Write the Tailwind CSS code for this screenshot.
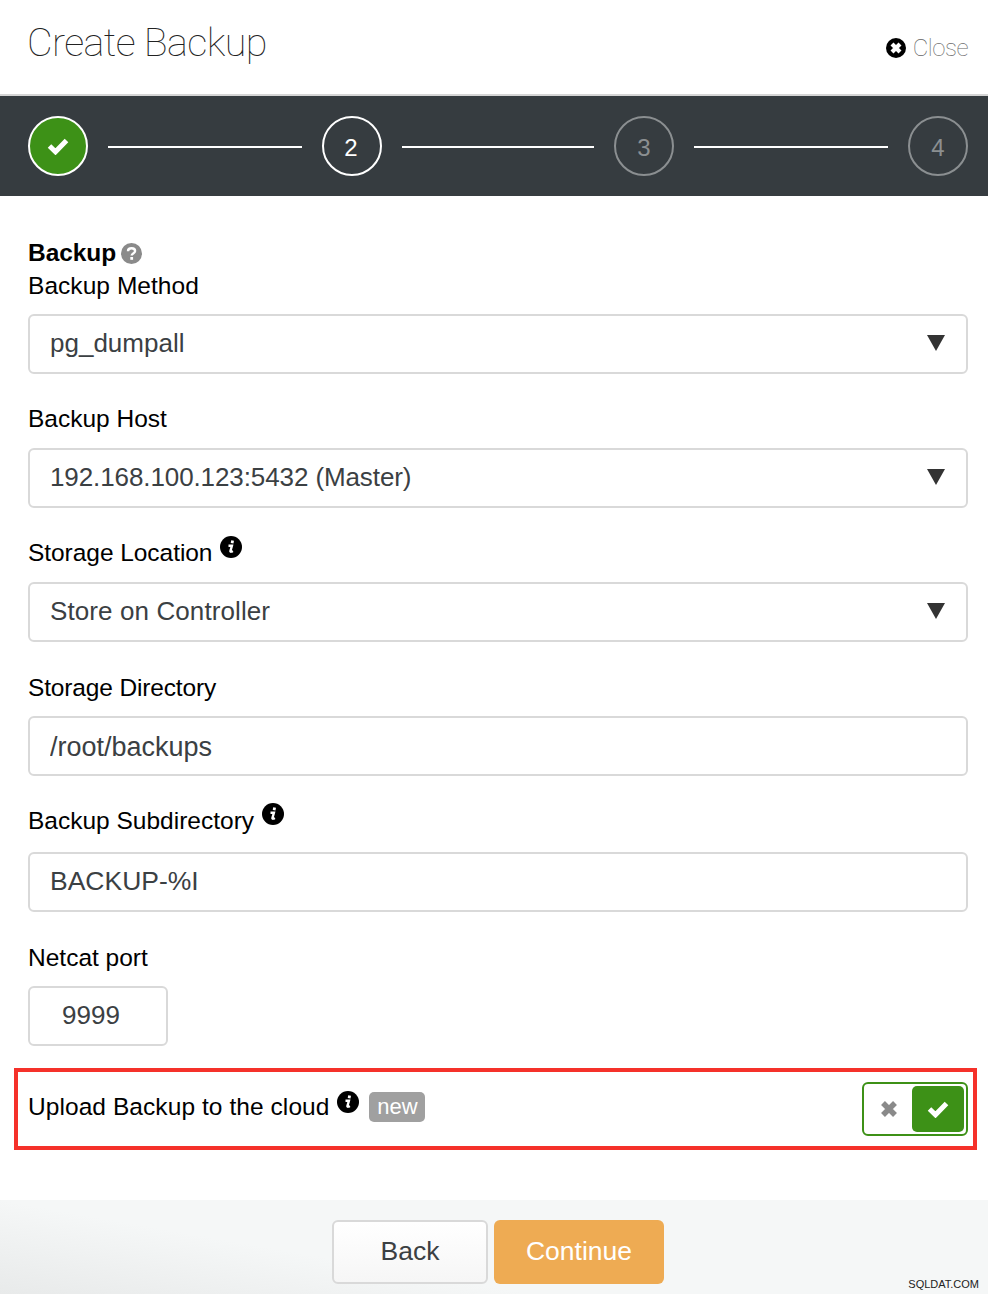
<!DOCTYPE html>
<html lang="en">
<head>
    <meta charset="UTF-8">
    <title>Create Backup</title>
    <script src="https://cdn.jsdelivr.net/npm/@tailwindcss/browser@4"></script>
</head>
<body class="bg-white font-['Liberation_Sans',sans-serif] text-black">
    <div class="w-[988px] h-[1294px] relative overflow-hidden flex flex-col">
        <!-- Header -->
        <header class="h-[96px] flex justify-between border-b-2 border-[#d5d5d5] pl-[28px] pr-[20px] shrink-0">
            <h1 class="font-['Roboto',sans-serif] font-thin text-[39.5px] leading-[48px] mt-[19px] ml-[-1px] tracking-[-0.6px] text-[#222]">Create Backup</h1>
            <a class="flex items-center gap-[7px] h-[24px] mt-[36px] font-['Roboto',sans-serif] font-thin text-[24px] tracking-[-0.5px] text-[#666]">
                <svg class="w-[20px] h-[20px]" viewBox="0 0 20 20"><circle cx="10" cy="10" r="10" fill="#000"/><path d="M6 6l8 8M14 6l-8 8" stroke="#fff" stroke-width="4.200"/></svg>
                Close
            </a>
        </header>

        <!-- Steps -->
        <nav class="h-[100px] bg-[#363c40] pl-[28px] pr-[20px] flex items-center shrink-0">
            <div class="w-[60px] h-[60px] rounded-full border-2 border-white bg-[#3d9117] flex items-center justify-center">
                <svg class="w-[22px] h-[18px]" viewBox="0 0 22 18"><path d="M2.500 9l6 5.800L19.500 3.500" fill="none" stroke="#fff" stroke-width="5"/></svg>
            </div>
            <div class="w-[194px] h-[2px] bg-white mx-[20px] mt-[2px]"></div>
            <div class="w-[60px] h-[60px] rounded-full border-2 border-white flex items-center justify-center text-white text-[24px] pt-[4px] pr-[2px]">2</div>
            <div class="w-[192px] h-[2px] bg-white mx-[20px] mt-[2px]"></div>
            <div class="w-[60px] h-[60px] rounded-full border-2 border-[#8b8f91] flex items-center justify-center text-[#8b8f91] text-[24px] pt-[4px]">3</div>
            <div class="w-[194px] h-[2px] bg-white mx-[20px] mt-[2px]"></div>
            <div class="w-[60px] h-[60px] rounded-full border-2 border-[#8b8f91] flex items-center justify-center text-[#8b8f91] text-[24px] pt-[4px]">4</div>
        </nav>

        <!-- Form -->
        <main class="pl-[28px] pr-[20px] text-[24.5px] flex-1">
            <div class="flex items-center gap-[5px] h-[32px] mt-[41px] font-bold tracking-[-0.05px]">
                Backup
                <svg class="w-[21px] h-[21px]" viewBox="0 0 21 21"><circle cx="10.500" cy="10.500" r="10.500" fill="#8a8a8a"/><path d="M7 8.200c0-2 1.600-3 3.600-3s3.500 1.100 3.500 2.900c0 2.500-3.400 2.400-3.400 4.400" fill="none" stroke="#fff" stroke-width="2.400"/><rect x="9.300" y="14" width="2.800" height="2.800" fill="#fff"/></svg>
            </div>

            <label class="block h-[32px] leading-[32px] mt-[1px] mb-[12px] tracking-[0.05px]">Backup Method</label>
            <div class="relative">
                <select class="w-full h-[60px] appearance-none border-2 border-[#d9d9d9] rounded-[6px] pl-[20px] pb-[2px] text-[26px] text-[#3b4043] bg-white">
                    <option>pg_dumpall</option>
                </select>
                <svg class="absolute right-[23px] top-[21px] w-[18px] h-[16px]" viewBox="0 0 18 16"><path d="M0 0h18L9 16z" fill="#333"/></svg>
            </div>

            <label class="block h-[32px] leading-[32px] mt-[29px] mb-[13px]">Backup Host</label>
            <div class="relative">
                <select class="w-full h-[60px] appearance-none border-2 border-[#d9d9d9] rounded-[6px] pl-[20px] pb-[2px] text-[26px] tracking-[-0.1px] text-[#3b4043] bg-white">
                    <option>192.168.100.123:5432 (Master)</option>
                </select>
                <svg class="absolute right-[23px] top-[21px] w-[18px] h-[16px]" viewBox="0 0 18 16"><path d="M0 0h18L9 16z" fill="#333"/></svg>
            </div>

            <div class="flex h-[32px] leading-[32px] mt-[29px] mb-[13px] gap-[8px]">
                <label class="tracking-[-0.05px]">Storage Location</label>
                <svg class="w-[22px] h-[22px] mt-[-1px]" viewBox="0 0 22 22"><circle cx="11" cy="11" r="11" fill="#000"/><path d="M8.500 9.800h3.400l-1.500 5.400c0 .8 1 .6 2.400-.3" fill="none" stroke="#fff" stroke-width="2.400"/><path d="M12.600 4.600l-.5 2.700" fill="none" stroke="#fff" stroke-width="2.800"/></svg>
            </div>
            <div class="relative">
                <select class="w-full h-[60px] appearance-none border-2 border-[#d9d9d9] rounded-[6px] pl-[20px] pb-[2px] text-[26px] tracking-[0.1px] text-[#3b4043] bg-white">
                    <option>Store on Controller</option>
                </select>
                <svg class="absolute right-[23px] top-[21px] w-[18px] h-[16px]" viewBox="0 0 18 16"><path d="M0 0h18L9 16z" fill="#333"/></svg>
            </div>

            <label class="block h-[32px] leading-[32px] mt-[30px] mb-[12px] tracking-[-0.15px]">Storage Directory</label>
            <input class="block w-full h-[60px] border-2 border-[#d9d9d9] rounded-[6px] px-[20px] pt-[2px] text-[27px] text-[#3b4043]" value="/root/backups">

            <div class="flex h-[32px] leading-[32px] mt-[29px] mb-[15px] gap-[8px]">
                <label>Backup Subdirectory</label>
                <svg class="w-[22px] h-[22px] mt-[-2px]" viewBox="0 0 22 22"><circle cx="11" cy="11" r="11" fill="#000"/><path d="M8.500 9.800h3.400l-1.500 5.400c0 .8 1 .6 2.400-.3" fill="none" stroke="#fff" stroke-width="2.400"/><path d="M12.600 4.600l-.5 2.700" fill="none" stroke="#fff" stroke-width="2.800"/></svg>
            </div>
            <input class="block w-full h-[60px] border-2 border-[#d9d9d9] rounded-[6px] px-[20px] pb-[2px] text-[26.500px] text-[#3b4043]" value="BACKUP-%I">

            <label class="block h-[32px] leading-[32px] mt-[30px] mb-[12px]">Netcat port</label>
            <input class="block w-[140px] h-[60px] border-2 border-[#d9d9d9] rounded-[6px] px-[32px] pb-[2px] text-[26px] text-[#3b4043]" value="9999">

            <!-- Highlighted row -->
            <div class="h-[82px] mt-[22px] ml-[-14px] mr-[-9px] border-4 border-[#f5312a] flex items-center justify-between pl-[10px] pr-[5px]">
                <div class="flex items-center mt-[-3px]">
                    <span class="tracking-[0.07px]">Upload Backup to the cloud</span>
                    <svg class="w-[22px] h-[22px] ml-[8px] mt-[-12px]" viewBox="0 0 22 22"><circle cx="11" cy="11" r="11" fill="#000"/><path d="M8.500 9.800h3.400l-1.500 5.400c0 .8 1 .6 2.400-.3" fill="none" stroke="#fff" stroke-width="2.400"/><path d="M12.600 4.600l-.5 2.700" fill="none" stroke="#fff" stroke-width="2.800"/></svg>
                    <span class="ml-[10px] mt-[-2px] h-[30px] w-[56px] rounded-[5px] bg-[#a0a0a0] text-white text-[22px] leading-[29px] text-center">new</span>
                </div>
                <div class="w-[106px] h-[54px] border-2 border-[#3d9117] rounded-[6px] flex items-center justify-between bg-white pr-[2px]">
                    <svg class="w-[18px] h-[18px] ml-[16px]" viewBox="0 0 18 18"><path d="M3 3l12 12M15 3L3 15" stroke="#8a8a8a" stroke-width="5.500"/></svg>
                    <div class="w-[52px] h-[46px] rounded-[5px] bg-[#3d9117] flex items-center justify-center">
                        <svg class="w-[22px] h-[18px]" viewBox="0 0 22 18"><path d="M2.500 9l6 5.800L19.500 3.500" fill="none" stroke="#fff" stroke-width="5"/></svg>
                    </div>
                </div>
            </div>
        </main>

        <!-- Footer -->
        <footer class="h-[94px] bg-[linear-gradient(190deg,#f5f7f7_65%,#e8eaea_100%)] flex justify-center gap-[6px] pt-[20px] pl-[8px] shrink-0">
            <button class="w-[156px] h-[64px] border-2 border-[#d9d9d9] rounded-[6px] bg-gradient-to-b from-white to-[#f6f6f6] text-[26.500px] text-[#3b4043]">Back</button>
            <button class="w-[170px] h-[64px] rounded-[6px] bg-[#eeab53] text-[26.500px] text-white">Continue</button>
        </footer>
        <span class="absolute right-[9px] bottom-[2px] text-[11px] text-[#222]">SQLDAT.COM</span>
    </div>
</body>
</html>
